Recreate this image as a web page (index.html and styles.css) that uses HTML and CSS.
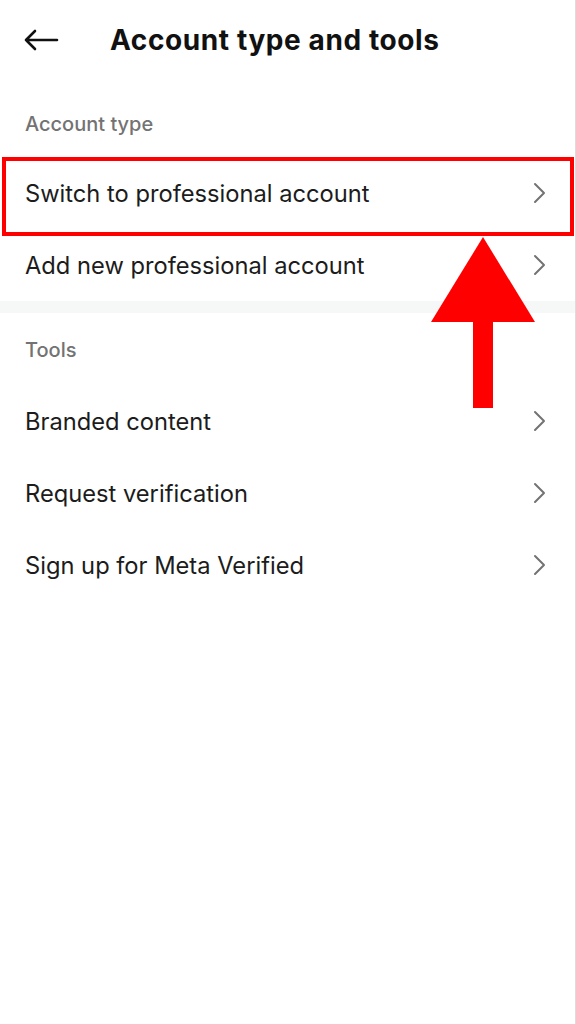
FILE: index.html
```html
<!DOCTYPE html>
<html lang="en">
<head>
<meta charset="utf-8">
<title>Account type and tools</title>
<link rel="stylesheet" href="styles.css">
</head>
<body>
<div class="screen">
  <header class="topbar">
    <svg class="back" width="36" height="24" viewBox="0 0 36 24" aria-hidden="true">
      <path d="M34 12H3M12 3L3 12l9 9" fill="none" stroke="#111" stroke-width="2.6" stroke-linecap="round" stroke-linejoin="round"/>
    </svg>
    <h1 class="title">Account type and tools</h1>
  </header>

  <section class="group">
    <div class="label">Account type</div>
    <div class="row">
      <span>Switch to professional account</span>
      <svg class="chev" width="14" height="22" viewBox="0 0 14 22"><path d="M2 2l9 9-9 9" fill="none" stroke="#737373" stroke-width="2" stroke-linecap="round" stroke-linejoin="round"/></svg>
    </div>
    <div class="row">
      <span>Add new professional account</span>
      <svg class="chev" width="14" height="22" viewBox="0 0 14 22"><path d="M2 2l9 9-9 9" fill="none" stroke="#737373" stroke-width="2" stroke-linecap="round" stroke-linejoin="round"/></svg>
    </div>
  </section>

  <div class="divider"></div>

  <section class="group">
    <div class="label tools">Tools</div>
    <div class="row">
      <span>Branded content</span>
      <svg class="chev" width="14" height="22" viewBox="0 0 14 22"><path d="M2 2l9 9-9 9" fill="none" stroke="#737373" stroke-width="2" stroke-linecap="round" stroke-linejoin="round"/></svg>
    </div>
    <div class="row">
      <span>Request verification</span>
      <svg class="chev" width="14" height="22" viewBox="0 0 14 22"><path d="M2 2l9 9-9 9" fill="none" stroke="#737373" stroke-width="2" stroke-linecap="round" stroke-linejoin="round"/></svg>
    </div>
    <div class="row">
      <span>Sign up for Meta Verified</span>
      <svg class="chev" width="14" height="22" viewBox="0 0 14 22"><path d="M2 2l9 9-9 9" fill="none" stroke="#737373" stroke-width="2" stroke-linecap="round" stroke-linejoin="round"/></svg>
    </div>
  </section>

  <div class="highlight"></div>
  <svg class="pointer" width="104" height="172" viewBox="0 0 104 172" aria-hidden="true">
    <polygon points="52,0 104,85 0,85" fill="#ff0000"/>
    <rect x="42" y="84" width="20" height="87" fill="#ff0000"/>
  </svg>
</div>
</body>
</html>
```

FILE: styles.css
```css
* { box-sizing: border-box; }
html, body { margin: 0; padding: 0; background: #fff; }
body {
  font-family: Inter, Roboto, "Liberation Sans", sans-serif;
  color: #1c1c1c;
}
.screen {
  position: relative;
  width: 576px;
  height: 1024px;
  border-right: 1px solid #dcdcdc;
  overflow: hidden;
}
.topbar {
  height: 80px;
  display: flex;
  align-items: center;
  padding-left: 23px;
}
.back { flex: none; }
.title {
  margin: 0 0 0 51px;
  font-size: 28px;
  font-weight: 700;
  letter-spacing: 0.6px;
  color: #111;
}
.label {
  padding: 33px 25px 22px;
  line-height: 22px;
  font-size: 20px;
  font-weight: 500;
  color: #737373;
}
.label.tools { padding: 26px 25px 24px; }
.row {
  height: 72px;
  display: flex;
  align-items: center;
  justify-content: space-between;
  padding: 0 28px 0 25px;
  font-size: 23.7px;
  color: #1c1c1c;
}
.chev { flex: none; }
.divider {
  height: 12px;
  background: #f6f7f7;
}
.highlight {
  position: absolute;
  left: 2px;
  top: 157px;
  width: 572px;
  height: 79px;
  border: 4px solid #ff0000;
}
.pointer {
  position: absolute;
  left: 431px;
  top: 237px;
}
```
